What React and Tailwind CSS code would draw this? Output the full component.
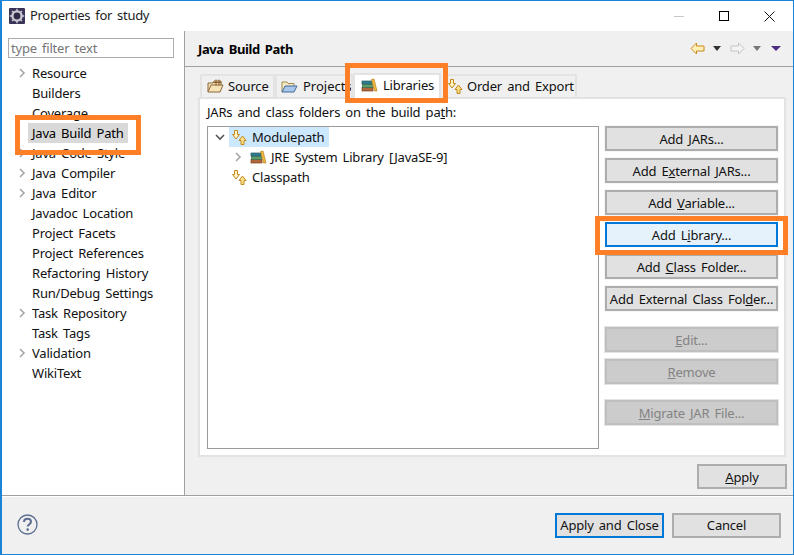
const FONT = { fontFamily: '"Noto Sans", sans-serif', wordSpacing: "2px", letterSpacing: "-0.2px" };

const leftItems = [
  { label: "Resource", arrow: true },
  { label: "Builders" },
  { label: "Coverage" },
  { label: "Java Build Path", selected: true },
  { label: "Java Code Style", arrow: true },
  { label: "Java Compiler", arrow: true },
  { label: "Java Editor", arrow: true },
  { label: "Javadoc Location" },
  { label: "Project Facets" },
  { label: "Project References" },
  { label: "Refactoring History" },
  { label: "Run/Debug Settings" },
  { label: "Task Repository", arrow: true },
  { label: "Task Tags" },
  { label: "Validation", arrow: true },
  { label: "WikiText" },
];

const Chevron = ({ down }) => (
  <svg className="shrink-0" width="10" height="10" viewBox="0 0 10 10" fill="none">
    <path
      d={down ? "M1 3l4 4 4-4" : "M3 1l4 4-4 4"}
      stroke={down ? "#555" : "#a6a6a6"}
      strokeWidth="1.6"
    />
  </svg>
);

const PathIcon = () => (
  <svg className="shrink-0" width="17" height="17" viewBox="0 0 17 17">
    <path
      d="M3.5 1.5h3v4h2l-3.5 4.5L1.5 5.5h2z"
      fill="#fff3c4"
      stroke="#c08a1e"
    />
    <path
      d="M11.5 7l3.5 4.5h-2v4h-3v-4h-2z"
      fill="#ffe08a"
      stroke="#c08a1e"
    />
  </svg>
);

const BooksIcon = () => (
  <svg className="shrink-0" width="17" height="14" viewBox="0 0 17 14">
    <rect x="1" y="9.5" width="11" height="3.5" fill="#b0653c" stroke="#7a4526" strokeWidth="0.7" />
    <rect x="1.5" y="6" width="10" height="3.5" fill="#5f9c6d" stroke="#3d6b49" strokeWidth="0.7" />
    <rect x="1" y="3" width="10" height="3" fill="#2f7c8c" stroke="#235b68" strokeWidth="0.7" />
    <path d="M10.5 1.5L13 1l3 12h-2.5z" fill="#f0b93f" stroke="#b5831f" strokeWidth="0.7" />
  </svg>
);

const SourceIcon = () => (
  <svg className="shrink-0" width="17" height="15" viewBox="0 0 17 15">
    <path d="M1 13V4h5l1-2h7v4" fill="#f3dfb4" stroke="#8c6a3a" />
    <path d="M1 13l3-7h12l-3 7z" fill="#f6e3b8" stroke="#8c6a3a" />
    <path d="M9 0.5v6M12 0.5v6M6.5 3.5h8" stroke="#8c5a2a" fill="none" />
  </svg>
);

const FolderIcon = () => (
  <svg className="shrink-0" width="17" height="15" viewBox="0 0 17 15">
    <path d="M1 13V3h5l1 1.5h6V7" fill="#f6ecc4" stroke="#9c8a50" />
    <path d="M1 13l3-6h12l-3 6z" fill="#a9c7ea" stroke="#44699c" />
  </svg>
);

const GearIcon = () => (
  <svg className="shrink-0" width="16" height="16" viewBox="0 0 16 16">
    <rect width="16" height="16" rx="1" fill="#3a3357" />
    <circle cx="8" cy="8" r="5.8" fill="#c9c9d2" />
    <circle cx="8" cy="8" r="3.4" fill="#2f2a47" />
    <path d="M8 .8v2.4M8 12.8v2.4M.8 8h2.4M12.8 8h2.4M3 3l1.6 1.6M11.4 11.4L13 13M13 3l-1.6 1.6M4.6 11.4L3 13" stroke="#c9c9d2" strokeWidth="1.4" />
  </svg>
);

const Triangle = ({ color, wide }) => (
  <svg width={wide ? 10 : 8} height="5" viewBox={wide ? "0 0 10 5" : "0 0 8 5"}>
    <path d={wide ? "M0 0h10L5 5z" : "M0 0h8L4 5z"} fill={color} />
  </svg>
);

const Tab = ({ icon, label, className }) => (
  <div
    className={`flex h-[23px] items-center border-t-2 border-r-2 border-l-2 border-[#e3e3e3] bg-[#f0f0f0] pb-px ${className}`}
  >
    {icon}
    <span className="whitespace-nowrap">{label}</span>
  </div>
);

const Btn = ({ children, className = "", disabled, active }) => (
  <div
    className={`flex h-[25px] w-[173px] items-center justify-center border-2 whitespace-nowrap ${
      active
        ? "border-[#0078d7] bg-[#e5f1fb]"
        : disabled
          ? "border-[#bfbfbf] bg-[#cccccc] text-[#838383] outline outline-[#e3e3e3]"
          : "border-[#adadad] bg-[#e1e1e1] outline outline-[#f5f5f5]"
    } ${className}`}
  >
    <span>{children}</span>
  </div>
);

export default function App() {
  return (
    <div
      style={FONT}
      className="relative flex h-[555px] w-[794px] flex-col overflow-hidden border-t border-r border-b border-l-2 border-[#1883d7] bg-[#f0f0f0] text-[13px] leading-5 text-[#111]"
    >
      {/* title bar */}
      <div className="flex h-[30px] shrink-0 items-center bg-white pl-[7px]">
        <GearIcon />
        <span className="ml-[5px] pb-[2px] tracking-[-0.3px] text-[#222]">Properties for study</span>
        <div className="ml-auto flex items-center">
          <div className="h-px w-[10px] bg-[#c8c8c8]" />
          <div className="ml-[35px] h-[10px] w-[10px] border border-black" />
          <svg className="ml-[35px] mr-[18px]" width="11" height="11" viewBox="0 0 11 11">
            <path d="M0.5 0.5l10 10M10.5 0.5l-10 10" stroke="#111" fill="none" />
          </svg>
        </div>
      </div>

      <div className="flex min-h-0 flex-1">
        {/* left tree */}
        <div className="w-[183px] shrink-0 border-r border-[#a0a0a0] bg-white">
          <div className="mt-[7px] ml-[6px] flex h-5 w-[166px] items-center border border-[#acacac] pl-[2px] text-[#757575]">
            type filter text
          </div>
          <div className="mt-[5px]">
            {leftItems.map((item) => (
              <div key={item.label} className="flex h-5 items-center pl-[13px]">
                <div className="flex w-[13px] justify-center">
                  {item.arrow && <Chevron />}
                </div>
                <span
                  className={`px-[4px] whitespace-nowrap ${item.selected ? "bg-[#d9d9d9] text-black" : ""}`}
                >
                  {item.label}
                </span>
              </div>
            ))}
          </div>
        </div>

        {/* right page */}
        <div className="flex min-w-0 flex-1 flex-col">
          <div className="flex h-[36px] shrink-0 items-center border-b border-[#a0a0a0] pr-[12px] pl-[13px]">
            <span className="pt-px font-bold tracking-[-0.4px] text-black">Java Build Path</span>
            <div className="ml-auto flex items-center">
              <svg width="15" height="13" viewBox="0 0 15 13">
                <path d="M6.5 1L1 6.5 6.5 12V9h7.5V4H6.5z" fill="#fff0b8" stroke="#c98a1e" />
              </svg>
              <div className="mr-[9px] ml-[8px]"><Triangle color="#333" /></div>
              <svg width="15" height="13" viewBox="0 0 15 13">
                <path d="M8.5 1L14 6.5 8.5 12V9H1V4h7.5z" fill="#f4f4f4" stroke="#c4c4c4" />
              </svg>
              <div className="mr-[10px] ml-[8px]"><Triangle color="#777" /></div>
              <Triangle color="#4b2d83" wide />
            </div>
          </div>

          <div className="pt-[7px] pr-[6px] pl-[13px]">
            <div className="relative z-10 flex h-[23px] items-start pl-[2px]">
              <Tab icon={<SourceIcon />} label="Source" className="w-[75px] gap-[4px] pl-[5px]" />
              <Tab icon={<FolderIcon />} label="Projects" className="w-[78px] gap-[5px] overflow-hidden pl-[4px] tracking-normal" />
              <div className="-mt-px flex h-[25px] w-[88px] shrink-0 items-center gap-[5px] border-2 border-b-0 border-[#e3e3e3] bg-white pb-[3px] pl-[6px]">
                <BooksIcon />
                <span>Libraries</span>
              </div>
              <Tab icon={<PathIcon />} label="Order and Export" className="ml-[4px] w-[132px] gap-[3px]" />
            </div>

            <div className="h-[360px] w-[588px] border-2 border-[#e3e3e3] bg-white">
              <div className="mt-[3px] ml-[7px] h-5">
                JARs and class folders on the build pa<u>t</u>h:
              </div>
              <div className="mt-[4px] ml-[7px] flex">
                <div className="h-[323px] w-[392px] border border-[#9a9a9a]">
                  <div className="flex h-5 items-center pl-[7px]">
                    <Chevron down />
                    <div className="ml-[4px] flex h-5 w-[100px] items-center gap-[4px] bg-[#cce8ff] pl-[2px]">
                      <PathIcon />
                      <span>Modulepath</span>
                    </div>
                  </div>
                  <div className="flex h-5 items-center pl-[25px]">
                    <Chevron />
                    <div className="ml-[7px]"><BooksIcon /></div>
                    <span className="ml-[4px] whitespace-nowrap">JRE System Library [JavaSE-9]</span>
                  </div>
                  <div className="flex h-5 items-center gap-[4px] pl-[23px]">
                    <PathIcon />
                    <span>Classpath</span>
                  </div>
                </div>
                <div className="ml-[6px] flex flex-col">
                  <div className="flex flex-col gap-[7px]">
                    <Btn>Add <u>J</u>ARs...</Btn>
                    <Btn>Add E<u>x</u>ternal JARs...</Btn>
                    <Btn>Add <u>V</u>ariable...</Btn>
                    <Btn active>Add L<u>i</u>brary...</Btn>
                    <Btn>Add <u>C</u>lass Folder...</Btn>
                    <Btn>Add External Class Fol<u>d</u>er...</Btn>
                  </div>
                  <div className="mt-[16px] flex flex-col gap-[7px]">
                    <Btn disabled><u>E</u>dit...</Btn>
                    <Btn disabled><u>R</u>emove</Btn>
                  </div>
                  <Btn disabled className="mt-[16px]"><u>M</u>igrate JAR File...</Btn>
                </div>
              </div>
            </div>

            <div className="mt-[7px] flex justify-end">
              <div className="flex h-[25px] w-[90px] items-center justify-center border-2 border-[#adadad] bg-[#e1e1e1]">
                <span><u>A</u>pply</span>
              </div>
            </div>
          </div>
        </div>
      </div>

      {/* footer */}
      <div className="flex h-[59px] shrink-0 items-start border-t border-[#a0a0a0] pt-[17px] pl-[15px] shadow-[inset_0_1px_0_#fff]">
        <svg className="mt-[1px]" width="21" height="21" viewBox="0 0 21 21">
          <circle cx="10.5" cy="10.5" r="9.5" fill="none" stroke="#5d6f91" strokeWidth="1.3" />
          <path d="M7 8c0-2 1.6-3.2 3.6-3.2S14 6 14 7.8c0 2.4-3.3 2.6-3.3 4.7" fill="none" stroke="#5d6f91" strokeWidth="2" />
          <circle cx="10.7" cy="15.6" r="1.3" fill="#5d6f91" />
        </svg>
        <div className="mr-[12px] ml-auto flex gap-[8px]">
          <div className="flex h-[25px] w-[109px] items-center justify-center border-2 border-[#0078d7] bg-[#e1e1e1] pb-px whitespace-nowrap">
            Apply and Close
          </div>
          <div className="flex h-[25px] w-[109px] items-center justify-center border-2 border-[#adadad] bg-[#e1e1e1] pb-px">
            Cancel
          </div>
        </div>
      </div>

      {/* orange callouts */}
      <div className="absolute top-[114px] left-[13px] z-20 h-[40px] w-[126px] border-[5px] border-[#ff7f27]" />
      <div className="absolute top-[62px] left-[343px] z-20 h-[40px] w-[103px] border-[5px] border-[#ff7f27]" />
      <div className="absolute top-[215px] left-[593px] z-20 h-[39px] w-[193px] border-[5px] border-[#ff7f27]" />
    </div>
  );
}
